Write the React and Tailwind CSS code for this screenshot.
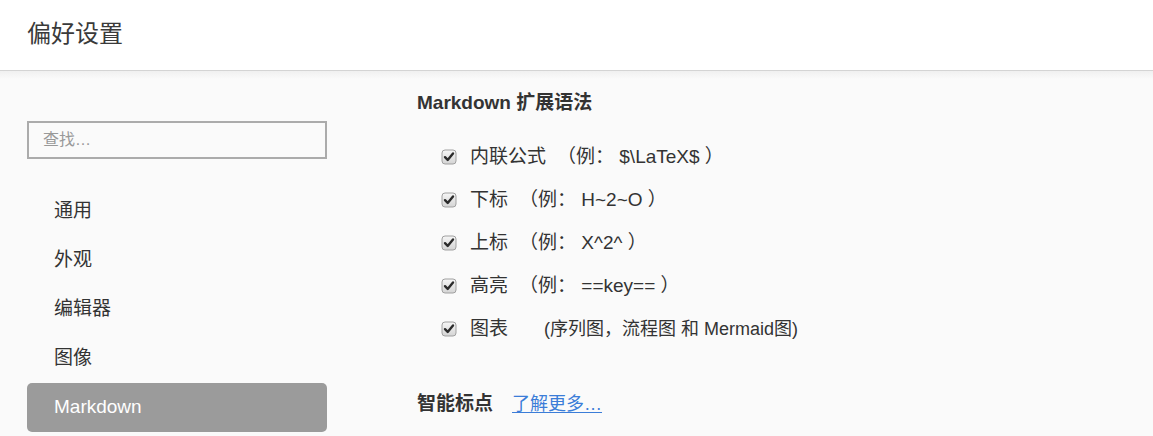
import React from "react";

const font = "font-['Liberation_Sans','Noto_Sans_CJK_SC',sans-serif]";

function Check() {
  return (
    <svg width="16" height="16" viewBox="0 0 16 16" className="shrink-0">
      <defs>
        <linearGradient id="cbg" x1="0" y1="0" x2="0" y2="1">
          <stop offset="0" stopColor="#f6f6f6" />
          <stop offset="1" stopColor="#d4d4d4" />
        </linearGradient>
      </defs>
      <rect x="1" y="1" width="14" height="14" rx="3" fill="url(#cbg)" stroke="#a0a0a0" strokeWidth="1" />
      <path d="M4 8.2 L6.7 10.9 L12 4.4" fill="none" stroke="#2b2b2b" strokeWidth="2.4" strokeLinecap="round" strokeLinejoin="round" />
    </svg>
  );
}

function Row({ children }) {
  return (
    <div className="flex h-[43px] items-center pl-[24px]">
      <Check />
      <div className="ml-[13px] flex items-center text-[19px] leading-[24px] text-[#333]">{children}</div>
    </div>
  );
}

export default function App() {
  const items = ["通用", "外观", "编辑器", "图像"];
  return (
    <div className={`${font} w-[1153px] h-[436px] overflow-hidden bg-[#fafafa] text-[#333]`}>
      <div className="relative h-[71px] bg-white border-b border-[#d4d4d4] flex items-center pl-[27px]">
        <span className="text-[24px] leading-[30px] text-[#3a3a3a] -mt-[2px]">偏好设置</span>
      </div>
      <div className="h-[8px] bg-gradient-to-b from-[#f0f0f0] to-[#fafafa]" />
      <div className="flex">
        <div className="w-[327px] pl-[27px] shrink-0">
          <div className="mt-[42px] h-[38px] w-[300px] border-2 border-[#ababab] bg-[#fafafa] flex items-center pl-[14px] text-[16px] text-[#999]">
            查找…
          </div>
          <div className="mt-[28px] flex flex-col">
            {items.map((t) => (
              <div key={t} className="h-[49px] flex items-center pl-[27px] text-[19px] text-[#333]">
                {t}
              </div>
            ))}
            <div className="h-[49px] flex items-center pl-[27px] text-[19px] text-white bg-[#9b9b9b] rounded-[5px]">
              Markdown
            </div>
          </div>
        </div>
        <div className="ml-[90px] flex flex-col">
          <div className="mt-[12px] h-[24px] flex items-center text-[19px] font-bold text-[#333]">Markdown 扩展语法</div>
          <div className="mt-[20px] flex flex-col">
            <Row>
              <span>内联公式</span>
              <span className="ml-[11px]">（例： $\LaTeX$ ）</span>
            </Row>
            <Row>
              <span>下标</span>
              <span className="ml-[11px]">（例： H~2~O ）</span>
            </Row>
            <Row>
              <span>上标</span>
              <span className="ml-[11px]">（例： X^2^ ）</span>
            </Row>
            <Row>
              <span>高亮</span>
              <span className="ml-[11px]">（例： ==key== ）</span>
            </Row>
            <Row>
              <span>图表</span>
              <span className="ml-[36px] text-[18px]">(序列图，流程图 和 Mermaid图)</span>
            </Row>
          </div>
          <div className="mt-[42px] h-[24px] flex items-center">
            <span className="text-[19px] font-bold text-[#333]">智能标点</span>
            <a className="ml-[19px] text-[18px] text-[#3b7dd8] underline underline-offset-2">了解更多…</a>
          </div>
        </div>
      </div>
    </div>
  );
}
